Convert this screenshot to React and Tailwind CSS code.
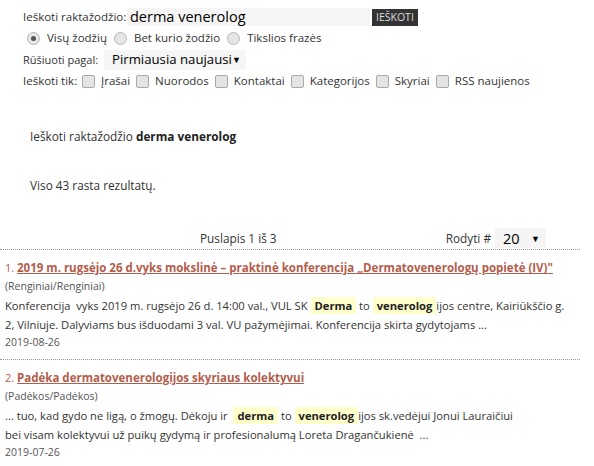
import React from 'react'

const font = { fontFamily: '"Open Sans", "Noto Sans", sans-serif' }

function Radio({ checked }) {
  return (
    <span className="inline-flex w-[13px] h-[13px] rounded-full border border-[#b5b5b5] bg-[#e6e6e6] items-center justify-center">
      {checked && <span className="w-[5px] h-[5px] rounded-full bg-[#555]"></span>}
    </span>
  )
}

function Check() {
  return <span className="inline-block w-[13px] h-[13px] rounded-[2px] border border-[#a9a9a9] bg-[#e4e4e4]"></span>
}

function Hl({ children }) {
  return <span className="bg-[#ffffcc] font-bold text-[#222] px-[4px] py-[1px]">{children}</span>
}

export default function App() {
  const filtrai = ['Įrašai', 'Nuorodos', 'Kontaktai', 'Kategorijos', 'Skyriai', 'RSS naujienos']

  return (
    <div className="w-[594px] h-[466px] bg-white text-[#333] overflow-hidden text-[11.8px]" style={font}>
      {/* Paieškos forma */}
      <div className="pl-[23px] pt-[8px] text-[11.5px]">
        <div className="flex items-center h-[18px] whitespace-nowrap">
          <span className="w-[104px] shrink-0">Ieškoti raktažodžio:</span>
          <span className="w-[243px] shrink-0 h-[18px] bg-[#f5f5f5] text-[14.5px] text-black pl-[3px] leading-[18px]">derma venerolog</span>
          <span className="ml-[2px] bg-[#333] text-[#ddd] text-[10.5px] h-[17px] px-[4px] leading-[17px]">IEŠKOTI</span>
        </div>
        <div className="flex items-center h-[24px] pl-[4px] whitespace-nowrap">
          <Radio checked /><span className="ml-[7px] mr-[7px]">Visų žodžių</span>
          <Radio /><span className="ml-[7px] mr-[7px]">Bet kurio žodžio</span>
          <Radio /><span className="ml-[7px]">Tikslios frazės</span>
        </div>
        <div className="flex items-center h-[20px] whitespace-nowrap">
          <span className="w-[81px] shrink-0 text-[11px]">Rūšiuoti pagal:</span>
          <span className="w-[142px] shrink-0 h-[20px] bg-[#f5f5f5] text-[13.2px] text-black pl-[8px] flex items-center">
            Pirmiausia naujausi
            <span className="ml-auto mr-[5px] text-[9px]">▼</span>
          </span>
        </div>
        <div className="flex items-center h-[22px] whitespace-nowrap">
          <span className="w-[59px] shrink-0">Ieškoti tik:</span>
          {filtrai.map(f => (
            <span key={f} className="flex items-center mr-[6px]">
              <Check /><span className="ml-[6px]">{f}</span>
            </span>
          ))}
        </div>
      </div>

      <div className="pl-[30px] pt-[36px]">
        Ieškoti raktažodžio <b className="text-[#222]">derma venerolog</b>
      </div>
      <div className="pl-[30px] pt-[31px]">Viso 43 rasta rezultatų.</div>

      {/* Puslapiavimas */}
      <div className="flex items-center h-[20px] mt-[34px] w-[546px] whitespace-nowrap">
        <span className="ml-[200px]">Puslapis 1 iš 3</span>
        <span className="ml-auto">Rodyti #</span>
        <span className="ml-[4px] w-[51px] h-[20px] bg-[#f5f5f5] text-[14.5px] text-black pl-[8px] flex items-center">
          20<span className="ml-auto mr-[6px] text-[9px]">▼</span>
        </span>
      </div>
      <div className="w-[580px] border-b border-dotted border-[#999] mt-[1px]"></div>

      {/* Rezultatai */}
      <div className="pl-[5px] w-[580px] pt-[9px] pb-[9px] border-b border-dotted border-[#999] text-[11.2px]">
        <div className="text-[#b35d4c] leading-[18px] whitespace-nowrap">
          <span className="text-[11px]">1. </span>
          <a className="font-bold underline text-[11.5px]">2019 m. rugsėjo 26 d.vyks mokslinė – praktinė konferencija „Dermatovenerologų popietė (IV)"</a>
        </div>
        <div className="text-[10.5px] text-[#555] leading-[19px]">(Renginiai/Renginiai)</div>
        <div className="leading-[19px] whitespace-nowrap">
          Konferencija{'\u00a0'} vyks 2019 m. rugsėjo 26 d. 14:00 val., VUL SK <Hl>Derma</Hl> to <Hl>venerolog</Hl>ijos centre, Kairiūkščio g.
        </div>
        <div className="leading-[19px] whitespace-nowrap">
          2, Vilniuje. Dalyviams bus išduodami 3 val. VU pažymėjimai. Konferencija skirta gydytojams ...
        </div>
        <div className="text-[10.5px] text-[#555] leading-[16px]">2019-08-26</div>
      </div>

      <div className="pl-[5px] w-[580px] pt-[9px] text-[11.2px]">
        <div className="text-[#b35d4c] leading-[18px] whitespace-nowrap">
          <span className="text-[11px]">2. </span>
          <a className="font-bold underline text-[11.5px]">Padėka dermatovenerologijos skyriaus kolektyvui </a>
        </div>
        <div className="text-[10.5px] text-[#555] leading-[19px]">(Padėkos/Padėkos)</div>
        <div className="leading-[19px] whitespace-nowrap">
          ... tuo, kad gydo ne ligą, o žmogų. Dėkoju ir{'\u00a0'} <Hl>derma</Hl> to <Hl>venerolog</Hl>ijos sk.vedėjui Jonui Lauraičiui
        </div>
        <div className="leading-[19px] whitespace-nowrap">
          bei visam kolektyvui už puikų gydymą ir profesionalumą Loreta Dragančukienė{'\u00a0'} ...
        </div>
        <div className="text-[10.5px] text-[#555] leading-[16px]">2019-07-26</div>
      </div>
    </div>
  )
}
